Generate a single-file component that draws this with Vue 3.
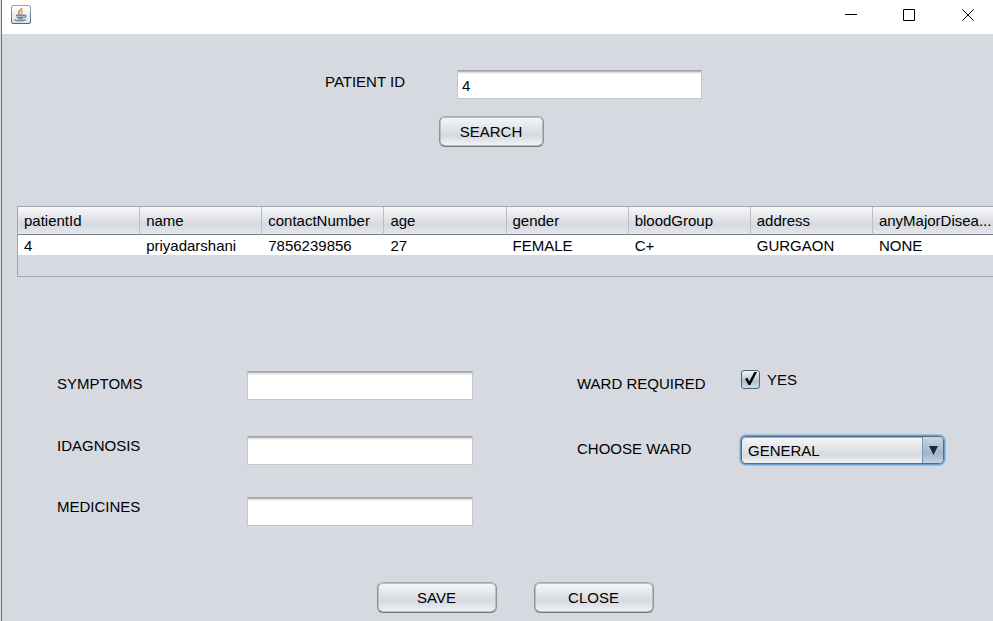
<script setup>
import { ref } from 'vue'

const patientId = ref('4')
const symptoms = ref('')
const diagnosis = ref('')
const medicines = ref('')
const wardRequired = ref(true)
const ward = ref('GENERAL')

const columns = ['patientId', 'name', 'contactNumber', 'age', 'gender', 'bloodGroup', 'address', 'anyMajorDisea...']
const rows = [['4', 'priyadarshani', '7856239856', '27', 'FEMALE', 'C+', 'GURGAON', 'NONE']]
</script>

<template>
  <div class="window">
    <header class="titlebar">
      <svg class="app-icon" viewBox="0 0 20 20" aria-hidden="true">
        <defs>
          <linearGradient id="iconEdge" x1="0" y1="0" x2="0" y2="1">
            <stop offset="0" stop-color="#8fa6b4" />
            <stop offset="1" stop-color="#4d6b80" />
          </linearGradient>
          <linearGradient id="iconFace" x1="0" y1="0" x2="0" y2="1">
            <stop offset="0" stop-color="#ffffff" />
            <stop offset="1" stop-color="#dfe1e3" />
          </linearGradient>
        </defs>
        <rect x="0.5" y="0.5" width="19" height="18" rx="1.5" fill="url(#iconFace)" stroke="url(#iconEdge)" />
        <path d="M10.500 3C11 5 7.300 5.800 7.600 7.600c.1.900.9 1.300 1.200 2" fill="none" stroke="#ee9345" stroke-width="1.900" />
        <path d="M11.800 5.600c-1.800 1-1.700 1.800-1.100 2.500.3.500 0 .9-.4 1.300" fill="none" stroke="#f0a060" stroke-width="1.500" />
        <path d="M5 10.300h8.200M5.600 12.200h7M6.800 14h5.200" fill="none" stroke="#6488a6" stroke-width="1.500" />
        <path d="M13 10.200c3-.5 2.400 2.200-.5 2.500" fill="none" stroke="#6488a6" stroke-width="1.200" />
        <path d="M4.500 14.400c-2.800 1.600 6.900 2.200 10.300.2" fill="none" stroke="#6f90ab" stroke-width="1.300" />
      </svg>
      <nav class="window-controls">
        <button type="button" aria-label="Minimize">
          <svg viewBox="0 0 12 12"><path d="M0 5.500h12" /></svg>
        </button>
        <button type="button" aria-label="Maximize">
          <svg viewBox="0 0 12 12"><path d="M.5.5h11v11H.5z" /></svg>
        </button>
        <button type="button" aria-label="Close window">
          <svg viewBox="0 0 12 12"><path d="M.3.3l11.400 11.400M11.700.3L.3 11.700" /></svg>
        </button>
      </nav>
    </header>

    <main class="content">
      <form class="search" @submit.prevent>
        <div class="search-row">
          <label for="patient-id">PATIENT ID</label>
          <input id="patient-id" v-model="patientId" class="field" type="text" />
        </div>
        <button class="btn btn-search" type="submit">SEARCH</button>
      </form>

      <div class="table-pane">
        <table>
          <thead>
            <tr><th v-for="name in columns" :key="name" scope="col">{{ name }}</th></tr>
          </thead>
          <tbody>
            <tr v-for="row in rows" :key="row[0]">
              <td v-for="(cell, i) in row" :key="i">{{ cell }}</td>
            </tr>
          </tbody>
        </table>
      </div>

      <form class="details" @submit.prevent>
        <div class="fields">
          <label class="roomy" for="symptoms">SYMPTOMS</label>
          <input id="symptoms" v-model="symptoms" class="field" type="text" />
          <label class="roomy second" for="ward-required">WARD REQUIRED</label>
          <div class="check">
            <input id="ward-required" v-model="wardRequired" type="checkbox" />
            <svg v-if="wardRequired" class="tick" viewBox="0 0 19 19" aria-hidden="true">
              <path d="M4 8.800l2.300-1 2 3.600L13.300 2h2.700L9.300 15H7.500z" />
            </svg>
            <label for="ward-required">YES</label>
          </div>

          <label for="diagnosis">IDAGNOSIS</label>
          <input id="diagnosis" v-model="diagnosis" class="field" type="text" />
          <label class="roomy second" for="ward">CHOOSE WARD</label>
          <div class="combo">
            <select id="ward" v-model="ward">
              <option>GENERAL</option>
            </select>
            <span class="combo-arrow">
              <svg viewBox="0 0 9 9" aria-hidden="true"><path d="M0 0h9L4.500 9z" /></svg>
            </span>
          </div>

          <label for="medicines">MEDICINES</label>
          <input id="medicines" v-model="medicines" class="field" type="text" />
        </div>

        <div class="actions">
          <button class="btn" type="submit">SAVE</button>
          <button class="btn" type="button">CLOSE</button>
        </div>
      </form>
    </main>
  </div>
</template>

<style>
body {
  margin: 0;
  background: #d6d9e0;
}
</style>

<style scoped>
* {
  box-sizing: border-box;
}

.window {
  min-height: 100vh;
  border-left: 1px solid #6f7072;
  margin-left: 1px;
  box-shadow: -1px 0 #dcdee0;
  background: #d6d9e0;
  color: #000;
  font: 15px/20px "Liberation Sans", Arial, sans-serif;
}

button,
input,
select {
  font: inherit;
  color: inherit;
}

.titlebar {
  display: flex;
  justify-content: space-between;
  align-items: flex-start;
  height: 34px;
  padding-left: 9px;
  background: #fff;
}

.app-icon {
  width: 20px;
  height: 20px;
  margin-top: 5px;
}

.window-controls {
  display: flex;
  padding-right: 2px;
}

.window-controls button {
  display: flex;
  align-items: center;
  justify-content: center;
  width: 58px;
  height: 30px;
  padding: 0;
  border: 0;
  background: none;
}

.window-controls button:last-child {
  width: 46px;
  margin-left: 7px;
}

.window-controls svg {
  width: 12px;
  height: 12px;
  fill: none;
  stroke: #000;
}

.search {
  display: flex;
  flex-direction: column;
  align-items: center;
  gap: 17px;
  padding-top: 36px;
}

.search-row {
  display: flex;
  align-items: flex-start;
  gap: 52px;
  padding-left: 32px;
}

.search-row label {
  line-height: 24px;
}

.search-row .field {
  width: 245px;
}

.field {
  width: 100%;
  height: 29px;
  padding: 2px 4px 0;
  border: 1px solid #c3c6cb;
  border-top-color: #a1a3a7;
  border-radius: 0;
  outline: 0;
  background: #fff;
  box-shadow: inset 0 1px #b5b6b8, inset 0 2px #e0e0e1, inset 0 3px #f4f4f4;
}

.btn {
  width: 120px;
  height: 31px;
  padding: 1px 0 0;
  border: 1px solid;
  border-color: #a6a9ae #8f9297 #73767a;
  border-radius: 6px;
  background: linear-gradient(#f6f7f9, #e4e6ea 35%, #d6d9df 60%, #d9dce2 68%, #f2f5fa);
  box-shadow: inset 0 0 0 1px #b9bcc1, inset 0 -1px #8f9296;
}

.btn-search {
  width: 105px;
  margin-right: 13px;
}

.table-pane {
  height: 71px;
  margin: 59px 0 0 15px;
  border: 1px solid #a4a7ae;
  border-right: 0;
  overflow: hidden;
}

table {
  width: calc(100% + 2px);
  table-layout: fixed;
  border-collapse: separate;
  border-spacing: 0;
}

th,
td {
  padding: 0 0 0 6px;
  text-align: left;
  font-weight: 400;
  white-space: nowrap;
}

th {
  height: 28px;
  border-right: 1px solid #bbbec5;
  border-bottom: 1px solid #7b7e84;
  background: linear-gradient(#f7f8fa, #e3e5e9 40%, #d6d9df 65%, #e3e6ec);
}

th:last-child {
  border-right: 0;
}

td {
  height: 20px;
  padding-top: 2px;
  line-height: 18px;
  background: #fff;
}

.fields {
  display: grid;
  grid-template-columns: 190fr 226fr 104fr 164fr 203fr;
  grid-template-rows: 65px 61px 29px;
  align-items: start;
  padding: 94px 49px 0 55px;
}

.roomy {
  line-height: 26px;
}

.second {
  grid-column: 4;
}

.check {
  position: relative;
  display: flex;
  align-items: center;
  gap: 7px;
  height: 17px;
}

.check input {
  appearance: none;
  width: 19px;
  height: 19px;
  margin: 0;
  border: 1px solid #536377;
  border-radius: 3px;
  background: linear-gradient(#f1f5f9, #c2d0de 45%, #acbfd1 60%, #cbdeee);
}

.tick {
  position: absolute;
  top: -1px;
  left: 0;
  width: 19px;
  height: 19px;
  pointer-events: none;
}

.combo {
  position: relative;
}

.combo select {
  appearance: none;
  display: block;
  width: 100%;
  height: 28px;
  padding: 2px 24px 0 6px;
  border: 1px solid #4f6f8c;
  border-radius: 5px;
  outline: 0;
  background: linear-gradient(#f7f7f9, #e5e6ea 40%, #d6d9df 68%, #f2f4f8);
  box-shadow: 0 0 0 1px #6f9fcb, 0 0 0 2px #a3bfdb, inset 0 1px #a0adba;
}

.combo-arrow {
  position: absolute;
  top: 1px;
  right: 1px;
  bottom: 1px;
  display: flex;
  align-items: center;
  justify-content: center;
  width: 21px;
  border-left: 1px solid #7f98ac;
  border-radius: 0 4px 4px 0;
  background: linear-gradient(#c8d6e3, #a7bccf 50%, #9fb5c9 60%, #bfd4e6);
  pointer-events: none;
}

.combo-arrow svg {
  width: 9px;
  height: 9px;
  fill: #202830;
}

.actions {
  display: flex;
  justify-content: center;
  gap: 37px;
  padding: 56px 0 8px 35px;
}
</style>
